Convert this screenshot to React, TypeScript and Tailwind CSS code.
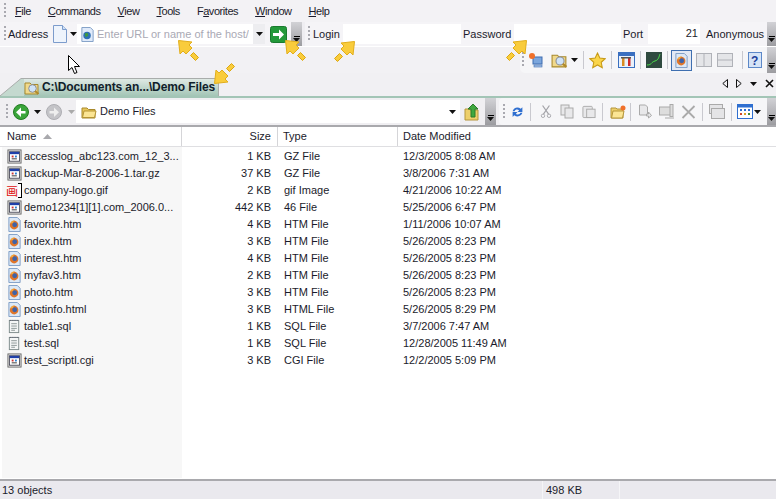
import type { ReactNode } from "react"

const font = "font-['Liberation_Sans',Arial,sans-serif]"

type FileRow = { name: string; size: string; type: string; date: string; icon: "app" | "gif" | "web" | "note" }

const files: FileRow[] = [
  { name: "accesslog_abc123.com_12_3...", size: "1 KB", type: "GZ File", date: "12/3/2005 8:08 AM", icon: "app" },
  { name: "backup-Mar-8-2006-1.tar.gz", size: "37 KB", type: "GZ File", date: "3/8/2006 7:31 AM", icon: "app" },
  { name: "company-logo.gif", size: "2 KB", type: "gif Image", date: "4/21/2006 10:22 AM", icon: "gif" },
  { name: "demo1234[1][1].com_2006.0...", size: "442 KB", type: "46 File", date: "5/25/2006 6:47 PM", icon: "app" },
  { name: "favorite.htm", size: "4 KB", type: "HTM File", date: "1/11/2006 10:07 AM", icon: "web" },
  { name: "index.htm", size: "3 KB", type: "HTM File", date: "5/26/2005 8:23 PM", icon: "web" },
  { name: "interest.htm", size: "4 KB", type: "HTM File", date: "5/26/2005 8:23 PM", icon: "web" },
  { name: "myfav3.htm", size: "2 KB", type: "HTM File", date: "5/26/2005 8:23 PM", icon: "web" },
  { name: "photo.htm", size: "3 KB", type: "HTM File", date: "5/26/2005 8:23 PM", icon: "web" },
  { name: "postinfo.html", size: "3 KB", type: "HTML File", date: "5/26/2005 8:29 PM", icon: "web" },
  { name: "table1.sql", size: "1 KB", type: "SQL File", date: "3/7/2006 7:47 AM", icon: "note" },
  { name: "test.sql", size: "1 KB", type: "SQL File", date: "12/28/2005 11:49 AM", icon: "note" },
  { name: "test_scriptl.cgi", size: "3 KB", type: "CGI File", date: "12/2/2005 5:09 PM", icon: "app" },
]

function Svg({ s = 16, children }: { s?: number; children: ReactNode }) {
  return (
    <svg width={s} height={s} viewBox="0 0 16 16" className="shrink-0">
      {children}
    </svg>
  )
}

function Gripper() {
  return <div className="h-[16px] w-[2px] shrink-0 bg-[repeating-linear-gradient(to_bottom,#a9a9b0_0,#a9a9b0_2px,transparent_2px,transparent_4px)]" />
}

function Sep({ className = "" }: { className?: string }) {
  return <div className={`h-[18px] w-px shrink-0 bg-[#c9c9cf] ${className}`} />
}

function Caret({ color = "#111", className = "" }: { color?: string; className?: string }) {
  return (
    <svg width="7" height="4" viewBox="0 0 7 4" className={`shrink-0 ${className}`}>
      <path d="M0 0h7L3.5 4z" fill={color} />
    </svg>
  )
}

function Overflow({ className = "" }: { className?: string }) {
  return (
    <div className={`flex shrink-0 flex-col items-center justify-end bg-gradient-to-b from-[#d2d2d6] to-[#9c9ca0] pb-[4px] ${className}`}>
      <div className="mb-px h-px w-[6px] bg-black" />
      <Caret />
    </div>
  )
}

function AppFileIcon() {
  return (
    <Svg s={15}>
      <rect x="1" y="1" width="14" height="14" fill="#f0f0f0" stroke="#666" />
      <rect x="2.5" y="3" width="11" height="10" fill="#fff" stroke="#223" strokeWidth="0.8" />
      <rect x="3" y="3" width="10" height="2.5" fill="#1f3fa8" />
      <rect x="5" y="7" width="2" height="2" fill="#c33" />
      <rect x="8.5" y="7" width="2" height="2" fill="#2a7fd0" />
      <rect x="5" y="10" width="5.5" height="1" fill="#333" />
    </Svg>
  )
}

function WebIcon() {
  return (
    <Svg s={15}>
      <path d="M2 .5h9l3 3v12H2z" fill="#dce8f6" stroke="#7d9cc4" />
      <circle cx="7.6" cy="8.6" r="4.6" fill="#e0762a" />
      <circle cx="8.2" cy="8.2" r="2.6" fill="#3f63a8" />
      <path d="M3.5 7c1-2.5 3-3.5 5-3.5-1 1-2 1.5-2 3z" fill="#f3a93c" />
    </Svg>
  )
}

function NoteIcon() {
  return (
    <Svg s={15}>
      <rect x="2.5" y="1.5" width="10" height="13" fill="#f4f6f6" stroke="#7c8a8a" />
      <path d="M3 1.5h9" stroke="#556" strokeDasharray="1 1" />
      <path d="M4.5 5h6M4.5 7.500h6M4.5 10h6M4.5 12h4" stroke="#8a9494" />
    </Svg>
  )
}

function GifIcon() {
  return (
    <div className="-ml-px flex h-[15px] w-[17px] shrink-0 items-center">
      <span className="w-[12px] font-['Noto_Sans_CJK_SC',sans-serif] text-[12px] leading-[15px] text-[#e01010]">画</span>
      <div className="h-[15px] w-[4px] border border-l-0 border-black bg-white" />
    </div>
  )
}

function FolderIcon({ s = 16 }: { s?: number }) {
  return (
    <Svg s={s}>
      <path d="M1 4h5l1.5 1.5h6.500v8.500H1z" fill="#e8c65a" stroke="#a8892c" />
      <path d="M1.500 13.500L3 7h12l-1.500 6.500z" fill="#fbe594" stroke="#b59433" />
    </Svg>
  )
}

function FolderSearchIcon({ s = 16 }: { s?: number }) {
  return (
    <Svg s={s}>
      <path d="M1 3h5l1.500 1.500h6.500v9.500H1z" fill="#f0d98c" stroke="#a8892c" />
      <circle cx="8.500" cy="8.500" r="3.800" fill="#cfe3f7" stroke="#8a8f99" />
      <path d="M11 11l3.500 3" stroke="#b08a2c" strokeWidth="2" />
    </Svg>
  )
}

function YellowArrow({ className, flip }: { className: string; flip?: "x" | "down" }) {
  const tf = flip === "x" ? "scale(-1,1) translate(-24,0)" : flip === "down" ? "rotate(270 12 12)" : undefined
  return (
    <svg width="24" height="24" viewBox="0 0 24 24" className={`absolute ${className}`}>
      <g transform={tf}>
        <path d="M1.500 1.500L15 3l-3 3 3 3-6 6-3-3-3 3z" fill="#f9cc3c" stroke="#e2ae1c" />
        <path d="M13.500 16.500l3-3 5 5-3 3z" fill="#f9cc3c" stroke="#dca70f" />
      </g>
    </svg>
  )
}

export default function App() {
  return (
    <div className={`relative flex h-[500px] w-[776px] flex-col overflow-hidden bg-white text-[11px] leading-[13px] text-[#1b1b2b] ${font}`}>
      {/* menu */}
      <div className="flex h-[22px] shrink-0 items-center bg-[#f3f2f5] pl-[4px]">
        <Gripper />
        <div className="ml-[9px] flex gap-[17px] tracking-[-0.45px]">
          <span><span className="underline">F</span>ile</span>
          <span><span className="underline">C</span>ommands</span>
          <span><span className="underline">V</span>iew</span>
          <span><span className="underline">T</span>ools</span>
          <span>F<span className="underline">a</span>vorites</span>
          <span><span className="underline">W</span>indow</span>
          <span><span className="underline">H</span>elp</span>
        </div>
      </div>

      {/* address + login */}
      <div className="flex h-[24px] shrink-0 items-stretch bg-[#efeef2]">
        <div className="flex w-[291px] shrink-0 items-center bg-[#f5f4f7] pl-[4px]">
          <Gripper />
          <span className="ml-[2px] w-[40px]">Address</span>
          <svg width="16" height="18" viewBox="0 0 16 18" className="ml-[4px] shrink-0">
            <path d="M1.500.5h9l4 4v13h-13z" fill="#eef4fc" stroke="#7c9ccc" />
            <path d="M10.500.5v4h4" fill="#cfe0f5" stroke="#7c9ccc" />
          </svg>
          <Caret className="ml-[2px]" />
          <div className="flex h-[20px] w-[188px] shrink-0 items-center bg-white pl-[3px]">
            <Svg s={15}>
              <path d="M2 .5h9l3 3v12H2z" fill="#dfeafa" stroke="#7d9cc4" />
              <circle cx="7.500" cy="9" r="4" fill="#2d6fb5" />
              <path d="M5 7l3-1 1 3-3 2z" fill="#3f9a3f" />
            </Svg>
            <span className="ml-[2px] w-[152px] overflow-hidden whitespace-nowrap text-[#a9a9b4]">Enter URL or name of the host/site</span>
            <div className="ml-[4px] flex h-[20px] w-[12px] items-center justify-center bg-[#ededf0]">
              <Caret />
            </div>
          </div>
          <svg width="17" height="17" viewBox="0 0 17 17" className="ml-[5px] shrink-0">
            <rect x="0.500" y="0.500" width="16" height="16" rx="2" fill="#23993a" stroke="#1a7a2e" />
            <path d="M3 7h6V3.500L14 8.500l-5 5V10H3z" fill="#fff" />
          </svg>
        </div>
        <Overflow className="w-[11px]" />
        <div className="ml-[3px] flex min-w-0 flex-1 items-center bg-[#f5f4f7] pl-[3px]">
          <Gripper />
          <span className="ml-[3px] w-[30px]">Login</span>
          <div className="h-[20px] w-[118px] bg-white" />
          <span className="ml-[2px] w-[51px]">Password</span>
          <div className="h-[20px] w-[107px] bg-white" />
          <span className="ml-[2px] w-[25px]">Port</span>
          <div className="h-[20px] w-[52px] bg-white pr-[2px] text-right leading-[18px]">21</div>
          <span className="ml-[6px] w-[61px] whitespace-nowrap">Anonymous</span>
        </div>
        <Overflow className="w-[9px]" />
      </div>

      {/* second toolbar */}
      <div className="mt-px flex h-[26px] shrink-0 justify-end bg-[#f2f1f4]">
        <div className="flex w-[256px] items-center rounded-bl-[5px] bg-[#f6f6f8] pl-[2px]">
          <Gripper />
          <div className="ml-[4px]">
            <Svg>
              <rect x="5" y="5" width="9" height="7" fill="#7ba6dd" stroke="#3e6db0" />
              <rect x="6" y="13" width="8" height="2" fill="#a8c3e8" stroke="#3e6db0" strokeWidth="0.6" />
              <circle cx="4" cy="4" r="3" fill="#f0702a" />
            </Svg>
          </div>
          <div className="ml-[7px]">
            <FolderSearchIcon s={17} />
          </div>
          <Caret className="ml-[3px]" />
          <Sep className="ml-[5px] mr-[5px]" />
          <Svg s={17}>
            <path d="M8 1l2.200 4.700 5 .6-3.700 3.400 1 5L8 12.200 3.500 14.700l1-5L.8 6.300l5-.6z" fill="#fad54a" stroke="#c79a17" />
          </Svg>
          <Sep className="ml-[5px] mr-[6px]" />
          <svg width="17" height="16" viewBox="0 0 17 16" className="shrink-0">
            <rect x="0.500" y="0.500" width="16" height="15" fill="#e9f1fb" stroke="#3a6fc0" />
            <rect x="1" y="1" width="15" height="3" fill="#3a6fc0" />
            <rect x="4" y="5" width="2.500" height="9" fill="#d88c22" />
            <rect x="10" y="5" width="2.500" height="9" fill="#cc2a2a" />
            <rect x="3" y="5" width="10" height="1.500" fill="#555" />
          </svg>
          <Sep className="ml-[5px] mr-[5px]" />
          <svg width="16" height="16" viewBox="0 0 16 16" className="shrink-0">
            <rect width="16" height="16" fill="#2f4a3f" />
            <path d="M1 13c5 0 4-3 8-4s4-5 5-7" fill="none" stroke="#4be04b" />
          </svg>
          <Sep className="ml-[5px] mr-[3px]" />
          <div className="flex h-[21px] w-[21px] shrink-0 items-center justify-center border border-[#3f6fb0] bg-[#e3e9f4]">
            <WebIcon />
          </div>
          <svg width="16" height="14" viewBox="0 0 16 14" className="ml-[4px] shrink-0">
            <rect x="0.500" y="0.500" width="15" height="13" fill="#e4e5e8" stroke="#b0b2b8" />
            <path d="M8 1v12" stroke="#b0b2b8" />
          </svg>
          <svg width="16" height="14" viewBox="0 0 16 14" className="ml-[5px] shrink-0">
            <rect x="0.500" y="0.500" width="15" height="13" fill="#e4e5e8" stroke="#b0b2b8" />
            <path d="M1 7h14" stroke="#b0b2b8" />
          </svg>
          <Sep className="ml-[9px] mr-[5px]" />
          <svg width="14" height="16" viewBox="0 0 14 16" className="shrink-0">
            <rect x="0.500" y="0.500" width="13" height="15" fill="#d6e4f7" stroke="#5c88c8" />
            <text x="3" y="13" fontSize="12" fontWeight="700" fill="#1b3f9c" fontFamily="'Liberation Sans'">?</text>
          </svg>
          <div className="flex-1" />
          <Overflow className="h-full w-[9px]" />
        </div>
      </div>

      {/* tabs */}
      <div className="flex h-[23px] shrink-0 items-end justify-between bg-[#f1f0f3]">
        <div className="flex h-[18px] items-stretch">
          <svg width="24" height="18" viewBox="0 0 24 18" className="shrink-0">
            <path d="M0 18L21 .5h3V18z" fill="#c4d9cf" />
            <path d="M0 18L21 .5h3" fill="none" stroke="#a9adab" />
          </svg>
          <div className="flex w-[195px] items-center border-r border-t border-[#a9adab] bg-gradient-to-b from-[#dfe9e4] to-[#a3c5b6]">
            <FolderSearchIcon />
            <span className="ml-[2px] whitespace-nowrap text-[12px] font-bold tracking-[-0.1px] text-[#10202a]">C:\Documents an...\Demo Files</span>
          </div>
        </div>
        <div className="mb-[8px] mr-[2px] flex items-center gap-[8px]">
          <svg width="6" height="9" viewBox="0 0 6 9">
            <path d="M5.500.500v8L.8 4.500z" fill="none" stroke="#111" />
          </svg>
          <svg width="6" height="9" viewBox="0 0 6 9">
            <path d="M.500.500v8l4.700-4z" fill="none" stroke="#111" />
          </svg>
          <Caret />
          <svg width="9" height="9" viewBox="0 0 9 9">
            <path d="M1 1l7 7M8 1L1 8" stroke="#111" strokeWidth="1.6" />
          </svg>
        </div>
      </div>
      <div className="h-[2px] shrink-0 bg-[#a3c5b6]" />

      {/* path toolbar */}
      <div className="flex h-[29px] shrink-0 items-stretch border-b-2 border-[#a9a9ad] bg-[#f0eff2]">
        <div className="flex w-[485px] shrink-0 items-center pl-[6px]">
          <Gripper />
          <svg width="16" height="16" viewBox="0 0 16 16" className="ml-[5px] shrink-0">
            <circle cx="8" cy="8" r="7.500" fill="#3aa53a" stroke="#217a21" />
            <path d="M12.500 7v2.500H8V13L3 8.200 8 3.500V7z" fill="#fff" />
          </svg>
          <Caret className="ml-[5px]" />
          <svg width="16" height="16" viewBox="0 0 16 16" className="ml-[5px] shrink-0">
            <circle cx="8" cy="8" r="7.500" fill="#c4c4c8" stroke="#aeaeb3" />
            <path d="M3.500 7v2.500H8V13l5-4.800L8 3.500V7z" fill="#eee" />
          </svg>
          <Caret color="#aaa" className="ml-[6px]" />
          <div className="ml-px flex h-[23px] w-[384px] shrink-0 items-center bg-white pl-[5px]">
            <FolderIcon />
            <span className="ml-[3px] flex-1">Demo Files</span>
            <Caret className="mr-[4px]" />
          </div>
          <svg width="17" height="18" viewBox="0 0 17 18" className="ml-[4px] shrink-0">
            <path d="M1 6h4l1 1h8v10H1z" fill="#edcf6a" stroke="#b5963a" />
            <path d="M9 1l5 5h-3v8H7V6H4z" fill="#3fa83f" stroke="#2a7a2a" />
          </svg>
        </div>
        <Overflow className="w-[11px]" />
        <div className="ml-[3px] flex flex-1 items-center rounded-l-[4px] bg-[#f6f6f8] pl-[4px]">
          <Gripper />
          <svg width="13" height="16" viewBox="0 0 16 16" className="ml-[6px] shrink-0">
            <path d="M2 7c1-4 6-6 10-3l2-2v6H8l2-2C8 4 5 5 4.500 7z" fill="#2f6fd0" />
            <path d="M14 9c-1 4-6 6-10 3l-2 2V8h6L6 10c2 2 5 1 5.500-1z" fill="#2f6fd0" />
          </svg>
          <Sep className="ml-[6px] mr-[9px]" />
          <svg width="12" height="15" viewBox="0 0 14 16" fill="none" stroke="#a3a3a8" className="shrink-0">
            <path d="M3 1l7 10M11 1L4 11" strokeWidth="1.4" />
            <circle cx="3.500" cy="13" r="2" />
            <circle cx="10.500" cy="13" r="2" />
          </svg>
          <svg width="14" height="15" viewBox="0 0 14 15" fill="#e8e8ea" stroke="#aaa" className="ml-[8px] shrink-0">
            <rect x="1" y="1" width="8" height="10" />
            <rect x="5" y="4" width="8" height="10" />
          </svg>
          <svg width="14" height="15" viewBox="0 0 15 15" fill="#e8e8ea" stroke="#aaa" className="ml-[8px] shrink-0">
            <rect x="1" y="2" width="10" height="12" rx="1" />
            <rect x="5" y="5" width="9" height="9" />
          </svg>
          <Sep className="ml-[6px] mr-[7px]" />
          <svg width="16" height="14" viewBox="0 0 16 14" className="shrink-0">
            <path d="M1 3h5l1 1h6v9H1z" fill="#edcf6a" stroke="#b5963a" />
            <path d="M1.500 13L3 6h11l-1.500 7z" fill="#fbe594" stroke="#b5963a" />
            <circle cx="13" cy="3" r="2.500" fill="#f0702a" />
          </svg>
          <Sep className="ml-[4px] mr-[7px]" />
          <svg width="15" height="15" viewBox="0 0 14 15" fill="#e8e8ea" stroke="#aaa" className="shrink-0">
            <path d="M1 1h6l2 2v8H1z" />
            <path d="M8 10h2V8l3 3.500L10 14v-2H8z" />
          </svg>
          <svg width="16" height="15" viewBox="0 0 16 15" fill="#ddd" stroke="#aaa" className="ml-[6px] shrink-0">
            <rect x="0.500" y="3" width="11" height="8" />
            <rect x="11" y="0.500" width="3" height="12" />
            <path d="M6 14h9" />
          </svg>
          <svg width="15" height="14" viewBox="0 0 14 14" className="ml-[6px] shrink-0">
            <path d="M1 1l12 12M13 1L1 13" stroke="#aaa" strokeWidth="1.8" />
          </svg>
          <Sep className="ml-[6px] mr-[6px]" />
          <svg width="16" height="15" viewBox="0 0 16 15" fill="#e4e4e6" stroke="#aaa" className="shrink-0">
            <rect x="0.500" y="0.500" width="13" height="9" />
            <rect x="2.500" y="4.500" width="13" height="10" />
          </svg>
          <Sep className="ml-[6px] mr-[5px]" />
          <svg width="16" height="15" viewBox="0 0 16 15" className="shrink-0">
            <rect x="0.500" y="0.500" width="15" height="14" fill="#fff" stroke="#2f6fd0" />
            <rect x="1" y="1" width="14" height="2.500" fill="#2f6fd0" />
            <path d="M3 5h2v2H3zM7 5h2v2H7zM11 5h2v2h-2z" fill="#2f6fd0" />
            <path d="M3 9h2v2H3z" fill="#d04a2a" />
            <path d="M7 9h2v2H7z" fill="#e0a020" />
            <path d="M11 9h2v2h-2z" fill="#3a8a3a" />
          </svg>
          <Caret className="ml-px" />
          <div className="flex-1" />
          <Overflow className="h-full w-[9px]" />
        </div>
      </div>

      {/* list header */}
      <div className="flex h-[20px] shrink-0 items-stretch border-b border-[#dfdfe2] bg-white">
        <div className="flex w-[182px] items-center border-r border-[#d5d5d8] pl-[7px]">
          Name
          <svg width="9" height="5" viewBox="0 0 9 5" className="ml-[7px]">
            <path d="M0 5h9L4.500 0z" fill="#a9a9ad" />
          </svg>
        </div>
        <div className="flex w-[96px] items-center justify-end border-r border-[#d5d5d8] pr-[6px]">Size</div>
        <div className="flex w-[120px] items-center border-r border-[#d5d5d8] pl-[5px]">Type</div>
        <div className="flex items-center pl-[5px]">Date Modified</div>
      </div>

      {/* file list */}
      <div className="min-h-0 flex-1 pb-px">
        <div className="h-full bg-[linear-gradient(to_right,#fff_2px,#f7f7f7_2px,#f7f7f7_182px,#fff_182px)] pt-px">
          {files.map((f) => (
            <div key={f.name} className="flex h-[17px] items-center">
              <div className="flex w-[182px] items-center pl-[7px]">
                <div className="flex w-[17px] shrink-0">
                  {f.icon === "app" && <AppFileIcon />}
                  {f.icon === "web" && <WebIcon />}
                  {f.icon === "note" && <NoteIcon />}
                  {f.icon === "gif" && <GifIcon />}
                </div>
                <span className="whitespace-nowrap">{f.name}</span>
              </div>
              <div className="w-[89px] text-right">{f.size}</div>
              <div className="ml-[13px] w-[119px]">{f.type}</div>
              <div className="whitespace-nowrap">{f.date}</div>
            </div>
          ))}
        </div>
      </div>

      {/* status bar */}
      <div className="mb-px flex h-[20px] shrink-0 items-center border-t-2 border-[#a9a9ad] bg-[#eae9ee]">
        <span className="ml-[2px] w-[540px]">13 objects</span>
        <span className="flex h-full w-[78px] items-center border-x border-[#f5f5f7] pl-[3px]">498 KB</span>
      </div>

      {/* annotation arrows and mouse pointer */}
      <YellowArrow className="left-[177px] top-[39px]" />
      <YellowArrow className="left-[284px] top-[39px]" />
      <YellowArrow className="left-[332px] top-[40px]" flip="x" />
      <YellowArrow className="left-[504px] top-[39px]" flip="x" />
      <YellowArrow className="left-[213px] top-[61px]" flip="down" />
      <svg width="14" height="20" viewBox="0 0 14 20" className="absolute left-[68px] top-[55px]">
        <path d="M.5.500v15l3.500-3 2.500 6 2.500-1-2.500-6h5z" fill="#fff" stroke="#000" />
      </svg>
    </div>
  )
}
